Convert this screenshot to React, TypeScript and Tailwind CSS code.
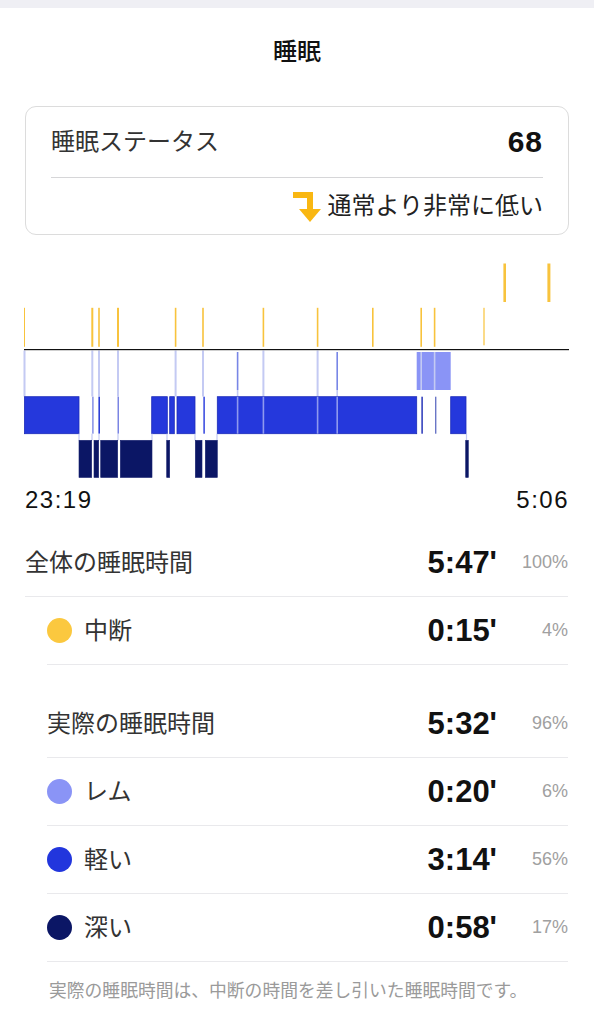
import React from "react";

const FONT = { fontFamily: '"Liberation Sans", "Noto Sans CJK JP", sans-serif' };

type R = [number, number];

const ORANGE = "#f8c33d";
const LIGHT = "#2538dc";
const DEEP = "#0b1665";
const REM = "#8a94f6";
const LAV = "#c4caf3";

const orangeShort: [number, number][] = [
  [24.5, 1],
  [92.3, 2],
  [99, 1.6],
  [118, 2],
  [175.6, 1.6],
  [203, 1.6],
  [263.4, 1.6],
  [317.6, 1.6],
  [372.8, 1.6],
  [421.2, 1.6],
  [434.6, 1.6],
  [484, 1.2],
];

const lightRects: R[] = [
  [24.5, 79],
  [151.7, 167.3],
  [169.7, 174.3],
  [177, 195],
  [217.3, 416.7],
  [450.7, 466],
];

const deepRects: R[] = [
  [79, 91.7],
  [94, 98.7],
  [100.7, 117.7],
  [120.3, 152],
  [166.7, 169.7],
  [195.3, 202],
  [205.3, 217.3],
  [465.7, 468.3],
];

function Hypnogram() {
  return (
    <svg width="594" height="226" viewBox="0 256 594 226" className="block">
      {/* tall awake marks */}
      <rect x="503.4" y="262.5" width="2.6" height="38.5" fill={ORANGE} />
      <rect x="547.4" y="262.5" width="3" height="38.5" fill={ORANGE} />
      {/* short awake marks */}
      {orangeShort.map(([x, w], i) => (
        <rect
          key={i}
          x={x - w / 2}
          y={306.8}
          width={w}
          height={x > 480 ? 37.5 : 39}
          fill={ORANGE}
        />
      ))}
      {/* connectors from awake line down to light band */}
      {orangeShort.slice(0, 8).map(([x], i) => (
        <rect key={"c" + i} x={x - 1} y={349.5} width={2} height={46} fill={LAV} />
      ))}
      {/* REM thin marks */}
      <rect x="236.8" y="351" width="1.6" height="38" fill="#7886e6" />
      <rect x="336.4" y="351" width="1.6" height="38" fill="#7886e6" />
      <rect x="236.8" y="389" width="1.6" height="7" fill={LAV} />
      <rect x="336.4" y="389" width="1.6" height="7" fill={LAV} />
      {/* REM block */}
      <rect x="416.7" y="351" width="34" height="38" fill={REM} />
      <rect x="420.4" y="351" width="1.6" height="38" fill={LAV} />
      <rect x="433.8" y="351" width="1.6" height="38" fill={LAV} />
      {/* light sleep */}
      {lightRects.map(([a, b], i) => (
        <rect
          key={"l" + i}
          x={a}
          y={395.7}
          width={b - a}
          height={37}
          fill={LIGHT}
          stroke="#1c2bb8"
          strokeWidth="0.8"
        />
      ))}
      {/* light separators */}
      {[237.6, 263.4, 317.6, 337.2].map((x, i) => (
        <rect key={"s" + i} x={x - 0.8} y={395.7} width={1.6} height={37} fill="#8f99ee" />
      ))}
      {/* thin light marks */}
      <rect x="92.2" y="395.7" width="1.4" height="37" fill="#7d88e4" />
      <rect x="98.4" y="395.7" width="1.6" height="37" fill="#2d3fd8" />
      <rect x="117.6" y="395.7" width="1.2" height="37" fill="#5b68dc" />
      <rect x="203.4" y="395.7" width="1.4" height="37" fill="#2538dc" />
      <rect x="421.4" y="395.7" width="1.4" height="37" fill="#1b2ab5" />
      <rect x="435" y="395.7" width="1.4" height="37" fill="#6a76c6" />
      {/* connectors light -> deep */}
      {[79, 92, 99, 118, 152, 167, 195, 217, 466.5].map((x, i) => (
        <rect key={"k" + i} x={x - 0.6} y={432.7} width={1.2} height={6.6} fill={LAV} />
      ))}
      {/* deep sleep */}
      {deepRects.map(([a, b], i) => (
        <rect
          key={"d" + i}
          x={a}
          y={439.3}
          width={b - a}
          height={37.2}
          fill={DEEP}
          stroke="#1a2370"
          strokeWidth="0.6"
        />
      ))}
      {/* awake baseline */}
      <rect x="24" y="348" width="545" height="1.2" fill="#111" />
    </svg>
  );
}

function Dot({ color }: { color: string }) {
  return <span className="block h-[25px] w-[25px] shrink-0 rounded-full" style={{ background: color }} />;
}

function Row({
  label,
  value,
  pct,
  dot,
  indent,
  extraTop,
}: {
  label: string;
  value: string;
  pct: string;
  dot?: string;
  indent?: boolean;
  extraTop?: boolean;
}) {
  return (
    <div
      className={
        "flex h-[68px] items-center border-b border-[#e9e9ec] " +
        (indent ? "ml-[47px] " : "ml-[25px] ") +
        (extraTop ? "mt-[25px] " : "") +
        "mr-[26px]"
      }
    >
      {dot && (
        <span className="mr-[12px]">
          <Dot color={dot} />
        </span>
      )}
      <span className="flex-1 text-[24px] text-[#333333]">{label}</span>
      <span className="text-[31px] font-bold leading-none text-[#111111]">{value}</span>
      <span className="w-[71px] text-right text-[18px] text-[#a0a0a0]">{pct}</span>
    </div>
  );
}

export default function App() {
  return (
    <div className="min-h-[1024px] w-[594px] bg-white" style={FONT}>
      <div className="h-[8px] bg-[#efeff4]" />
      <div className="flex h-[88px] items-center justify-center">
        <span className="text-[24px] font-medium text-[#111111]">睡眠</span>
      </div>

      <div className="mx-[25px] mt-[10px] rounded-[11px] border border-[#dcdcdc] px-[25px]">
        <div className="flex h-[70px] items-center justify-between">
          <span className="text-[24px] text-[#333333]">睡眠ステータス</span>
          <span className="text-[30px] font-bold leading-none tracking-[1px] text-[#111111]">68</span>
        </div>
        <div className="h-px bg-[#d6d6d8]" />
        <div className="flex h-[56px] items-center justify-end">
          <svg width="30" height="31" viewBox="0 0 30 31" className="mr-[4px] mt-[2px]">
            <rect x="0" y="0" width="20" height="6" fill="#f9b712" />
            <rect x="14" y="0" width="6" height="19" fill="#f9b712" />
            <polygon points="6,17 28,17 17,30" fill="#f9b712" />
          </svg>
          <span className="text-[24px] text-[#222222]">通常より非常に低い</span>
        </div>
      </div>

      <div className="mt-[22px]">
        <Hypnogram />
      </div>

      <div className="mt-[4px] flex h-[26px] items-center justify-between px-[25px] text-[24px] leading-none text-[#111111]">
        <span className="tracking-[1.5px]">23:19</span>
        <span className="tracking-[1.5px]">5:06</span>
      </div>

      <div className="mt-[16px]">
        <Row label="全体の睡眠時間" value="5:47'" pct="100%" />
        <Row label="中断" value="0:15'" pct="4%" dot="#fbc83f" indent />
        <Row label="実際の睡眠時間" value="5:32'" pct="96%" indent extraTop />
        <Row label="レム" value="0:20'" pct="6%" dot="#8a94f6" indent />
        <Row label="軽い" value="3:14'" pct="56%" dot="#2236dd" indent />
        <Row label="深い" value="0:58'" pct="17%" dot="#0b1665" indent />
        <p className="ml-[49px] mt-[16px] text-[17.8px] leading-[26px] text-[#9a9a9a]">
          実際の睡眠時間は、中断の時間を差し引いた睡眠時間です。
        </p>
      </div>
    </div>
  );
}
